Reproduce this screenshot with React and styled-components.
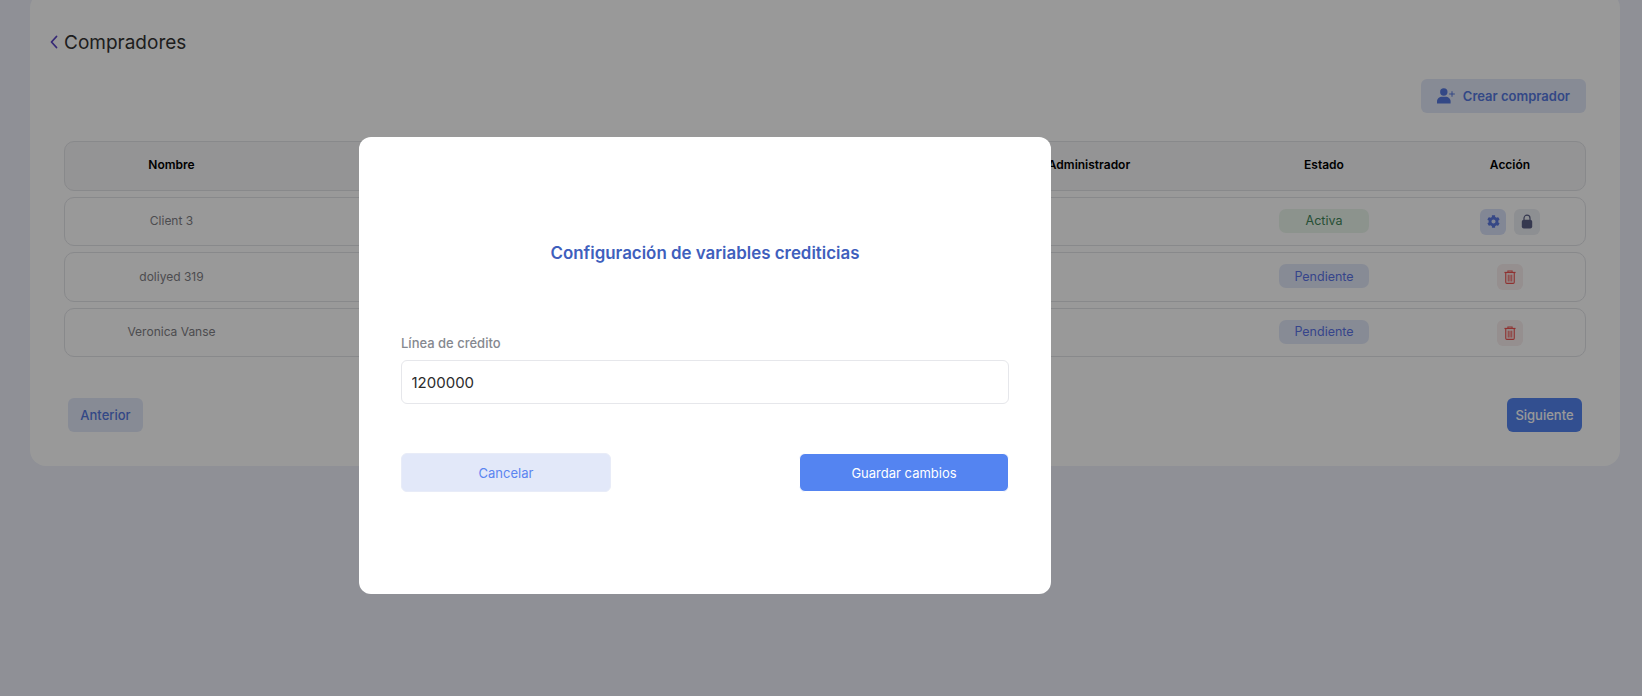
import React from 'react';
import styled, { createGlobalStyle } from 'styled-components';
import { FaCog } from 'react-icons/fa';

const GlobalStyle = createGlobalStyle`
  html, body {
    margin: 0;
    height: 100%;
    overflow: hidden;
    background: #eef1fa;
    font-family: Inter, "Liberation Sans", sans-serif;
  }
  * { box-sizing: border-box; }
`;

const Page = styled.div`
  height: 696px;
  padding: 0 22px 0 30px;
`;

const Card = styled.section`
  height: 474px;
  margin-top: -8px;
  padding: 34px 34px 0;
  background: #fff;
  border-radius: 16px;
`;

const TitleRow = styled.div`
  display: flex;
  align-items: center;
  gap: 6px;
  height: 32px;
  margin-left: -14px;
`;

const PageTitle = styled.h1`
  margin: 0;
  font-size: 19px;
  font-weight: 400;
  color: #333;
`;

const Toolbar = styled.div`
  display: flex;
  justify-content: flex-end;
  margin-top: 21px;
  margin-bottom: 28px;
`;

const SoftButton = styled.button`
  display: flex;
  align-items: center;
  justify-content: center;
  gap: 8px;
  height: 34px;
  padding: 0 16px;
  border: 0;
  border-radius: 6px;
  background: #e2e8f9;
  color: #5578e0;
  font: 600 13px Inter, sans-serif;
`;

const PagerButton = styled(SoftButton)`
  width: 75px;
  padding: 0;
  font-weight: 500;
  background: ${(p) => (p.$solid ? '#5484f1' : '#e2e8f9')};
  color: ${(p) => (p.$solid ? '#fff' : '#5578e0')};
`;

const Table = styled.div`
  display: flex;
  flex-direction: column;
  gap: 6px;
`;

const Row = styled.div`
  display: grid;
  grid-template-columns: 213px 1fr 248px 222px 150px;
  align-items: center;
  height: ${(p) => p.$h}px;
  border: 1px solid #e3e4e8;
  border-radius: 10px;
  background: ${(p) => (p.$head ? '#f7f7f8' : '#fff')};
  font-size: 12px;
  text-align: center;
  color: #7f8085;
`;

const HeadCell = styled.div`
  font-weight: 600;
  color: #000;
  margin-top: -3px;
`;

const NameCell = styled.div`
  margin-top: -2px;
`;

const Badge = styled.div`
  width: 90px;
  height: 24px;
  margin: -2px auto 0;
  display: flex;
  align-items: center;
  justify-content: center;
  border-radius: 7px;
  font-size: 12.5px;
  background: ${(p) => (p.$ok ? '#eaf5ec' : '#e2e8f9')};
  color: ${(p) => (p.$ok ? '#3f8558' : '#5b74e8')};
`;

const Actions = styled.div`
  display: flex;
  justify-content: center;
  gap: 8px;
`;

const IconButton = styled.div`
  width: 26px;
  height: 26px;
  display: flex;
  align-items: center;
  justify-content: center;
  border-radius: 6px;
  font-size: 13px;
  background: ${(p) => p.$bg};
  color: ${(p) => p.$fg};
`;

const Pager = styled.div`
  display: flex;
  justify-content: space-between;
  margin: 41px 4px 0;
`;

const Overlay = styled.div`
  position: fixed;
  inset: 0;
  background: rgba(0, 0, 0, 0.4);
`;

const Modal = styled.div`
  position: absolute;
  left: 359px;
  top: 137px;
  width: 692px;
  height: 457px;
  padding: 0 42px;
  display: flex;
  flex-direction: column;
  background: #fff;
  border-radius: 12px;
`;

const ModalTitle = styled.h2`
  margin: 105px 0 0;
  text-align: center;
  font-size: 16.9px;
  line-height: 22px;
  font-weight: 600;
  color: #3f5fbd;
`;

const Label = styled.label`
  margin-top: 71px;
  font-size: 13px;
  line-height: 16px;
  font-weight: 500;
  color: #85888f;
`;

const Input = styled.input`
  margin-top: 9px;
  height: 44px;
  padding: 0 9.5px;
  border: 1px solid #e6e7eb;
  border-radius: 6px;
  font: 400 15px Inter, sans-serif;
  color: #2b2b2b;
  outline: none;
`;

const ModalActions = styled.div`
  display: flex;
  justify-content: space-between;
  align-items: center;
  margin-top: 49px;
`;

const ModalButton = styled.button`
  width: 210px;
  height: 39px;
  border-radius: 6px;
  font: 400 13px Inter, sans-serif;
  background: ${(p) => (p.$primary ? '#5484f1' : '#e2e8f9')};
  color: ${(p) => (p.$primary ? '#fff' : '#5b85f0')};
  border: ${(p) => (p.$primary ? '1px solid #fff' : '1px solid #e8ecf8')};
`;

const BackIcon = () => (
  <svg width="8" height="14" viewBox="0 0 8 14" fill="none" stroke="#5a44c4" strokeWidth="1.8" strokeLinecap="round" strokeLinejoin="round">
    <path d="M6.5 1.5 1.5 7l5 5.5" />
  </svg>
);

const UserPlusIcon = () => (
  <svg width="18" height="16" viewBox="0 0 18 16" fill="currentColor">
    <circle cx="6.8" cy="4" r="3.7" />
    <path d="M0 15.6v-2.2C0 10.6 2.4 8.8 5 8.8h3.6c2.6 0 5 1.8 5 4.6v2.2z" />
    <path d="M14.5 3.2h1v2.3h2.3v1h-2.3v2.3h-1V6.5h-2.3v-1h2.3z" />
  </svg>
);

const LockIcon = () => (
  <svg width="12" height="15" viewBox="0 0 12 15" fill="currentColor">
    <path d="M3 6.5V4.2a3 3 0 0 1 6 0v2.3" fill="none" stroke="currentColor" strokeWidth="1.2" />
    <rect x="0.8" y="5.8" width="10.4" height="8.6" rx="2" />
  </svg>
);

const TrashIcon = () => (
  <svg width="12" height="14" viewBox="0 0 13 15" fill="none" stroke="currentColor">
    <path d="M0.5 2.6h12" strokeWidth="1.3" />
    <path d="M4.2 2.2V.9h4.6v1.3" strokeWidth="1.1" />
    <path d="M1.9 3v10.2c0 .7.5 1.2 1.2 1.2h6.8c.7 0 1.2-.5 1.2-1.2V3" strokeWidth="1.2" />
    <path d="M4.6 5v7.4M6.5 5v7.4M8.4 5v7.4" strokeWidth="1" />
  </svg>
);

const rows = [
  { name: 'Client 3', status: 'Activa', h: 49 },
  { name: 'doliyed 319', status: 'Pendiente', h: 50 },
  { name: 'Veronica Vanse', status: 'Pendiente', h: 49 },
];

export default function App() {
  return (
    <Page>
      <GlobalStyle />
      <Card>
        <TitleRow>
          <BackIcon />
          <PageTitle>Compradores</PageTitle>
        </TitleRow>
        <Toolbar>
          <SoftButton>
            <UserPlusIcon />
            Crear comprador
          </SoftButton>
        </Toolbar>
        <Table>
          <Row $head $h={50}>
            <HeadCell>Nombre</HeadCell>
            <span />
            <HeadCell>Administrador</HeadCell>
            <HeadCell>Estado</HeadCell>
            <HeadCell>Acción</HeadCell>
          </Row>
          {rows.map((r) => (
            <Row key={r.name} $h={r.h}>
              <NameCell>{r.name}</NameCell>
              <span />
              <span />
              <Badge $ok={r.status === 'Activa'}>{r.status}</Badge>
              <Actions>
                {r.status === 'Activa' ? (
                  <>
                    <IconButton $bg="#d9e1f8" $fg="#5b78e0"><FaCog /></IconButton>
                    <IconButton $bg="#eceef3" $fg="#5a5f86"><LockIcon /></IconButton>
                  </>
                ) : (
                  <IconButton $bg="#f8eeee" $fg="#ef5350"><TrashIcon /></IconButton>
                )}
              </Actions>
            </Row>
          ))}
        </Table>
        <Pager>
          <PagerButton>Anterior</PagerButton>
          <PagerButton $solid>Siguiente</PagerButton>
        </Pager>
      </Card>
      <Overlay />
      <Modal>
        <ModalTitle>Configuración de variables crediticias</ModalTitle>
        <Label>Línea de crédito</Label>
        <Input defaultValue="1200000" />
        <ModalActions>
          <ModalButton>Cancelar</ModalButton>
          <ModalButton $primary>Guardar cambios</ModalButton>
        </ModalActions>
      </Modal>
    </Page>
  );
}
